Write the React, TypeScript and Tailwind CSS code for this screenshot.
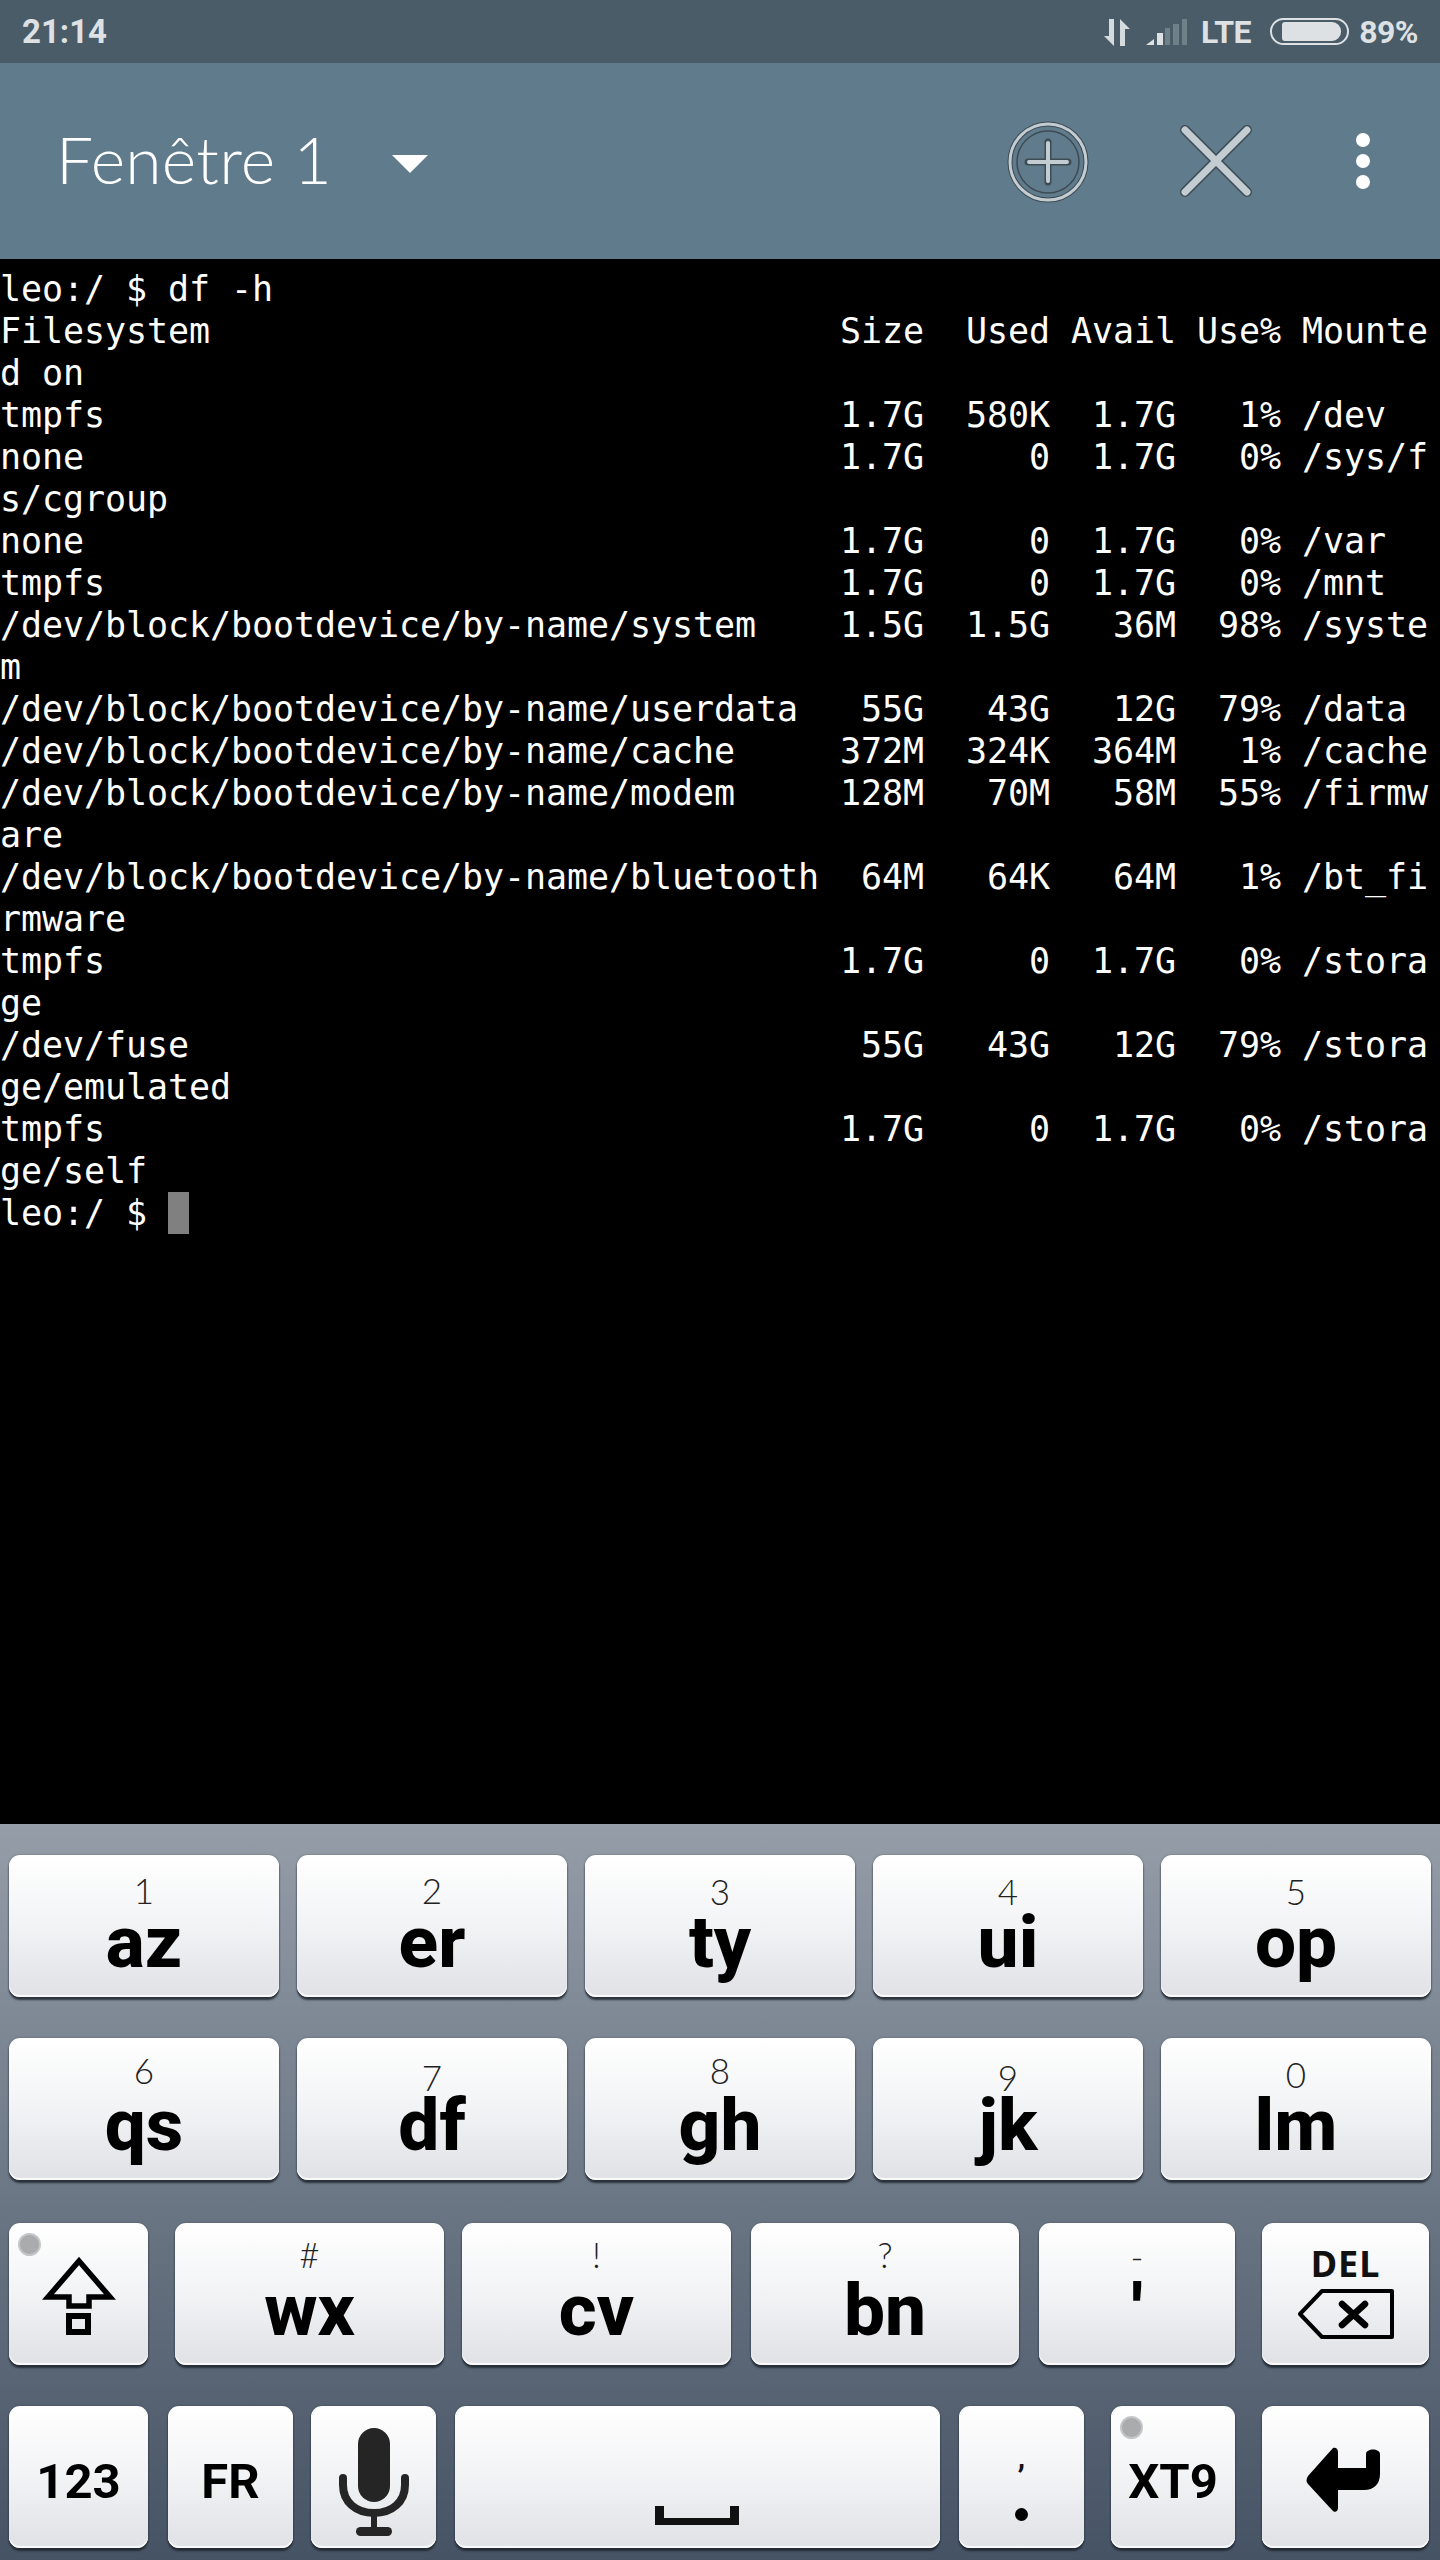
import React from "react";

const W = 68;
function row(name: string, size: string, used: string, avail: string, use: string, mount: string) {
  return (
    name.padEnd(39) +
    " " +
    size.padStart(4) +
    used.padStart(6) +
    avail.padStart(6) +
    use.padStart(5) +
    " " +
    mount
  );
}
function wrap(s: string) {
  const out: string[] = [];
  for (let i = 0; i < s.length; i += W) out.push(s.slice(i, i + W));
  return out;
}
const P = "/dev/block/bootdevice/by-name/";
const lines = [
  "leo:/ $ df -h",
  ...wrap(row("Filesystem", "Size", "Used", "Avail", "Use%", "Mounted on")),
  ...wrap(row("tmpfs", "1.7G", "580K", "1.7G", "1%", "/dev")),
  ...wrap(row("none", "1.7G", "0", "1.7G", "0%", "/sys/fs/cgroup")),
  ...wrap(row("none", "1.7G", "0", "1.7G", "0%", "/var")),
  ...wrap(row("tmpfs", "1.7G", "0", "1.7G", "0%", "/mnt")),
  ...wrap(row(P + "system", "1.5G", "1.5G", "36M", "98%", "/system")),
  ...wrap(row(P + "userdata", "55G", "43G", "12G", "79%", "/data")),
  ...wrap(row(P + "cache", "372M", "324K", "364M", "1%", "/cache")),
  ...wrap(row(P + "modem", "128M", "70M", "58M", "55%", "/firmware")),
  ...wrap(row(P + "bluetooth", "64M", "64K", "64M", "1%", "/bt_firmware")),
  ...wrap(row("tmpfs", "1.7G", "0", "1.7G", "0%", "/storage")),
  ...wrap(row("/dev/fuse", "55G", "43G", "12G", "79%", "/storage/emulated")),
  ...wrap(row("tmpfs", "1.7G", "0", "1.7G", "0%", "/storage/self")),
];

function Key({
  className = "",
  top,
  topClass = "",
  main,
  mainClass = "font-extrabold text-[73px] leading-[60px] top-[57px]",
  dot,
  children,
}: {
  className?: string;
  top?: string;
  topClass?: string;
  main?: string;
  mainClass?: string;
  dot?: boolean;
  children?: React.ReactNode;
}) {
  return (
    <div
      className={`relative h-[142px] shrink-0 rounded-[11px] bg-gradient-to-b from-[#ffffff] via-[#f2f3f5] to-[#dfe1e5] shadow-[inset_0_-2px_1px_#fbfbfb,0_3px_2px_rgba(28,36,46,0.85),0_0_2px_rgba(40,50,60,0.5)] flex flex-col items-center text-black font-['Roboto',sans-serif] ${className}`}
    >
      {dot && (
        <span className="absolute left-[9px] top-[10px] w-[23px] h-[23px] rounded-full bg-[#a9abad] border-2 border-[#c4c6c8]" />
      )}
      {top && (
        <span className={`absolute left-0 right-0 text-center font-['Lato',sans-serif] font-light text-[35px] leading-[30px] text-[#222] ${topClass}`}>
          {top}
        </span>
      )}
      {main && <span className={`absolute left-0 right-0 text-center ${mainClass}`}>{main}</span>}
      {children}
    </div>
  );
}

const light = "#c3ccd1";
const dark = "#3d4b55";
const small = "font-bold text-[49px] leading-[56px] top-[48px]";

export default function App() {
  return (
    <div className="w-[1440px] h-[2560px] flex flex-col overflow-hidden bg-black">
      {/* status bar */}
      <div className="h-[63px] bg-[#4a5c68] flex items-center pl-[22px] pr-[22px] text-[#dde1e4] font-['Roboto',sans-serif] font-bold text-[33px]">
        <span>21:14</span>
        <div className="ml-auto flex items-center">
          <svg width="26" height="27" viewBox="0 0 26 27" className="mr-[16px] mt-[1px]">
            <path d="M5 0H10V27L0 17H5Z" fill="#d5dadd" />
            <path d="M16 0L26 10H21V27H16Z" fill="#d5dadd" />
          </svg>
          <svg width="41" height="26" viewBox="0 0 41 26" className="mr-[14px] mt-[1px]">
            <path d="M0 26L8 20V26Z" fill="#dde1e4" />
            <rect x="11" y="14" width="6" height="12" fill="#dde1e4" />
            <rect x="19" y="9" width="5" height="17" fill="#6f8089" />
            <rect x="27" y="5" width="6" height="21" fill="#6f8089" />
            <rect x="36" y="0" width="5" height="26" fill="#6f8089" />
          </svg>
          <span className="tracking-[-0.5px] mr-[19px] text-[32px]">LTE</span>
          <div className="w-[79px] h-[27px] rounded-[14px] border-2 border-[#dde1e4] pl-[10px] pr-[6px] py-[2px] mr-[10px]">
            <div className="w-full h-full rounded-r-[9px] rounded-l-[3px] bg-[#dde1e4]" />
          </div>
          <span className="text-[32px] tracking-[-0.5px]">89%</span>
        </div>
      </div>
      {/* toolbar */}
      <div className="h-[196px] bg-[#607b8b] flex items-center text-white relative">
        <span className="ml-[56px] mb-[4px] font-['Lato',sans-serif] font-light text-[66px] leading-none w-[336px] tracking-[0.2px]">Fenêtre 1</span>
        <svg width="36" height="18" viewBox="0 0 36 18" className="mt-[6px]">
          <path d="M0 0H36L18 18Z" fill="#fff" />
        </svg>
        <svg width="84" height="84" viewBox="0 0 84 84" className="absolute left-[1006px] top-[57px]">
          <circle cx="42" cy="42" r="38" fill="none" stroke={dark} strokeWidth="5" />
          <circle cx="42" cy="42" r="38" fill="none" stroke={light} strokeWidth="3" />
          <circle cx="42" cy="42" r="31" fill="none" stroke={dark} strokeWidth="1.5" />
          <path d="M42 22V62M22 42H62" stroke={dark} strokeWidth="7" strokeLinecap="round" />
          <path d="M42 23V61M23 42H61" stroke={light} strokeWidth="4" strokeLinecap="round" />
        </svg>
        <svg width="72" height="72" viewBox="0 0 72 72" className="absolute left-[1180px] top-[62px]">
          <path d="M5 5L67 67M67 5L5 67" stroke={dark} strokeWidth="10" strokeLinecap="round" />
          <path d="M5 5L67 67M67 5L5 67" stroke={light} strokeWidth="7" strokeLinecap="round" />
        </svg>
        <div className="absolute left-[1356px] top-[70px] flex flex-col gap-[7px]">
          <span className="w-[14px] h-[14px] rounded-full bg-white" />
          <span className="w-[14px] h-[14px] rounded-full bg-white" />
          <span className="w-[14px] h-[14px] rounded-full bg-white" />
        </div>
      </div>
      {/* terminal */}
      <div className="flex-1 bg-black text-white pt-[9px] font-['DejaVu_Sans_Mono',monospace] text-[35px] leading-[42px] whitespace-pre tracking-[-0.07px]">
        {lines.map((l, i) => (
          <div key={i} className="h-[42px]">
            {l}
          </div>
        ))}
        <div className="h-[42px] flex items-start">
          {"leo:/ $ "}
          <span className="inline-block w-[21px] h-[42px] bg-[#808080]" />
        </div>
      </div>
      {/* keyboard */}
      <div className="h-[736px] bg-gradient-to-b from-[#959da8] to-[#465364] pt-[31px] pl-[9px] flex flex-col">
        <div className="flex gap-[18px]">
          <Key className="w-[270px]" top="1" topClass="top-[20px]" main="az" />
          <Key className="w-[270px]" top="2" topClass="top-[20px]" main="er" />
          <Key className="w-[270px]" top="3" topClass="top-[21px]" main="ty" />
          <Key className="w-[270px]" top="4" topClass="top-[21px]" main="ui" />
          <Key className="w-[270px]" top="5" topClass="top-[21px]" main="op" />
        </div>
        <div className="flex gap-[18px] mt-[41px]">
          <Key className="w-[270px]" top="6" topClass="top-[17px]" main="qs" />
          <Key className="w-[270px]" top="7" topClass="top-[24px]" main="df" />
          <Key className="w-[270px]" top="8" topClass="top-[17px]" main="gh" />
          <Key className="w-[270px]" top="9" topClass="top-[24px]" main="jk" />
          <Key className="w-[270px]" top="0" topClass="top-[21px]" main="lm" />
        </div>
        <div className="flex mt-[43px]">
          <Key className="w-[139px]" dot>
            <svg width="74" height="82" viewBox="0 0 74 82" className="mt-[33px]">
              <path d="M37 5L68 41H47V50H27V41H6Z" fill="none" stroke="#000" strokeWidth="5.5" strokeLinejoin="miter" />
              <rect x="27" y="60" width="19" height="16" fill="none" stroke="#000" strokeWidth="6" />
            </svg>
          </Key>
          <Key className="w-[269px] ml-[27px]" top="#" topClass="top-[16px]" main="wx" />
          <Key className="w-[269px] ml-[18px]" top="!" topClass="top-[16px]" main="cv" />
          <Key className="w-[268px] ml-[20px]" top="?" topClass="top-[16px]" main="bn" />
          <Key className="w-[196px] ml-[20px]" top="-" topClass="top-[18px]" main="'" />
          <Key className="w-[167px] ml-[27px]">
            <span className="absolute left-0 right-0 text-center font-['Noto_Sans',sans-serif] font-bold text-[36px] leading-[40px] top-[21px] tracking-[1px] text-[#111]">DEL</span>
            <svg width="96" height="50" viewBox="0 0 96 50" className="mt-[66px]">
              <path d="M94 2H24L2 25L24 48H94Z" fill="none" stroke="#000" strokeWidth="4" strokeLinejoin="round" />
              <path d="M44 15L67 36M67 15L44 36" stroke="#000" strokeWidth="6.5" strokeLinecap="round" />
            </svg>
          </Key>
        </div>
        <div className="flex mt-[41px]">
          <Key className="w-[139px]" main="123" mainClass={small} />
          <Key className="w-[125px] ml-[20px]" main="FR" mainClass={small} />
          <Key className="w-[125px] ml-[18px]">
            <svg width="72" height="112" viewBox="0 0 72 112" className="mt-[21px]">
              <rect x="20" y="1" width="32" height="74" rx="16" fill="#252525" />
              <path d="M5 51V58C5 75 18 86 36 86C54 86 67 75 67 58V51" fill="none" stroke="#252525" strokeWidth="8" strokeLinecap="round" />
              <rect x="33" y="86" width="6" height="18" fill="#252525" />
              <rect x="18" y="100" width="36" height="9" rx="4.5" fill="#252525" />
            </svg>
          </Key>
          <Key className="w-[485px] ml-[19px]">
            <svg width="84" height="19" viewBox="0 0 84 19" className="mt-[100px] ml-[-1px]">
              <path d="M0 0H9V12H75V0H84V19H0Z" fill="#111" />
            </svg>
          </Key>
          <Key className="w-[125px] ml-[19px]">
            <span className="absolute left-0 right-0 text-center font-bold text-[30px] leading-[36px] top-[34px] text-[#111]">,</span>
            <span className="absolute left-[56px] top-[102px] w-[13px] h-[13px] rounded-full bg-black" />
          </Key>
          <Key className="w-[124px] ml-[27px]" dot main="XT9" mainClass={small} />
          <Key className="w-[167px] ml-[27px]">
            <svg width="80" height="72" viewBox="0 0 80 72" className="mt-[40px]">
              <path d="M27 2C30 1 32 3 32 6V22H60V8C60 2 74 2 74 8V28C74 38 68 44 58 44H32V62C32 66 28 67 26 64L2 38C0 36 0 33 2 30Z" fill="#000" />
            </svg>
          </Key>
        </div>
      </div>
    </div>
  );
}
